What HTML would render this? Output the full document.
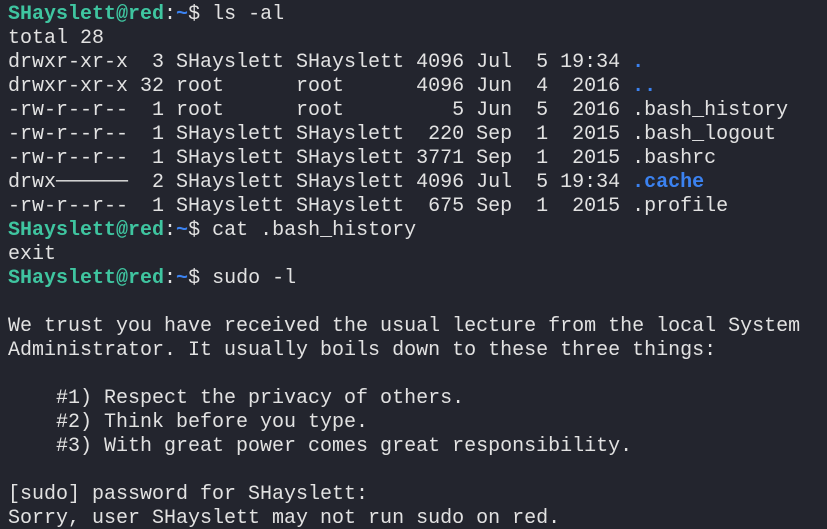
<!DOCTYPE html>
<html><head><meta charset="utf-8"><style>
html,body{margin:0;padding:0;background:#23252e;width:827px;height:529px;overflow:hidden}
pre{margin:0;padding:3px 0 0 8px;font-family:"Liberation Mono","DejaVu Sans Mono",monospace;font-size:20px;line-height:24px;color:#e2e2e2;white-space:pre}
.g{color:#3fc5a0;font-weight:bold}
.b{color:#3b82f0;font-weight:bold}
</style></head><body><pre><span class="g">SHayslett@red</span>:<span class="b">~</span>$ ls -al
total 28
drwxr-xr-x  3 SHayslett SHayslett 4096 Jul  5 19:34 <span class="b">.</span>
drwxr-xr-x 32 root      root      4096 Jun  4  2016 <span class="b">..</span>
-rw-r--r--  1 root      root         5 Jun  5  2016 .bash_history
-rw-r--r--  1 SHayslett SHayslett  220 Sep  1  2015 .bash_logout
-rw-r--r--  1 SHayslett SHayslett 3771 Sep  1  2015 .bashrc
drwx──────  2 SHayslett SHayslett 4096 Jul  5 19:34 <span class="b">.cache</span>
-rw-r--r--  1 SHayslett SHayslett  675 Sep  1  2015 .profile
<span class="g">SHayslett@red</span>:<span class="b">~</span>$ cat .bash_history
exit
<span class="g">SHayslett@red</span>:<span class="b">~</span>$ sudo -l

We trust you have received the usual lecture from the local System
Administrator. It usually boils down to these three things:

    #1) Respect the privacy of others.
    #2) Think before you type.
    #3) With great power comes great responsibility.

[sudo] password for SHayslett:
Sorry, user SHayslett may not run sudo on red.</pre></body></html>
